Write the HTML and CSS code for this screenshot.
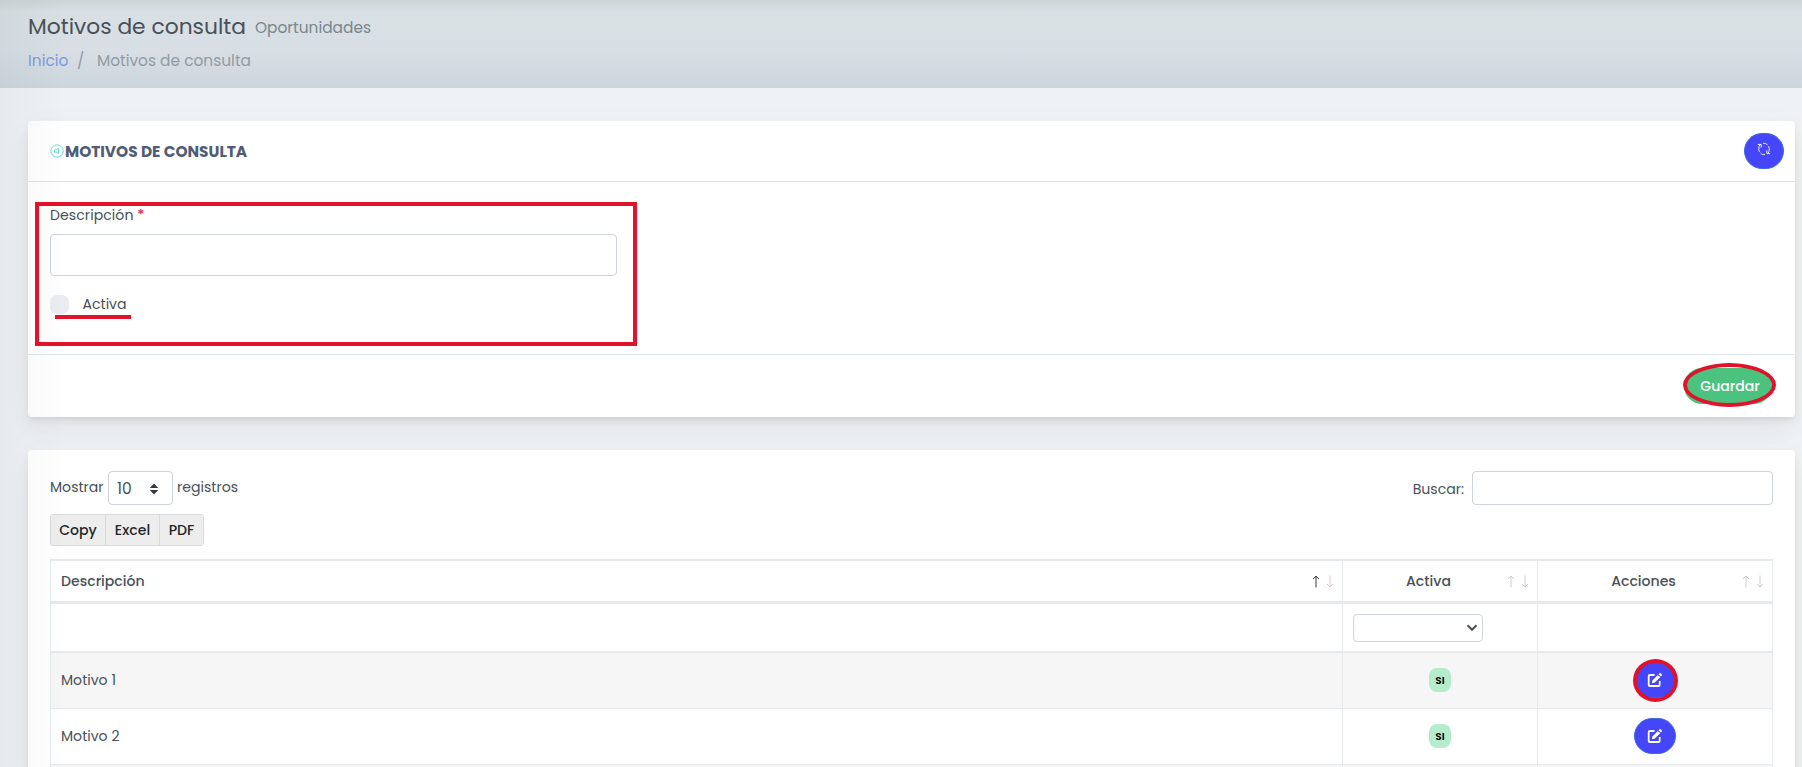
FILE: index.html
```html
<!DOCTYPE html>
<html lang="es">
<head>
<meta charset="utf-8">
<title>Motivos de consulta</title>
<link rel="stylesheet" href="styles.css">
</head>
<body>
<div class="page">
  <header class="page-head">
    <div class="title-row"><h1 class="title">Motivos de consulta</h1><span class="subtitle">Oportunidades</span></div>
    <nav class="crumbs"><a class="crumb-link">Inicio</a><span class="crumb-sep">/</span><span class="crumb-current">Motivos de consulta</span></nav>
  </header>
  <main class="content">
    <section class="card form-card">
      <div class="card-head">
        <svg class="card-icon" width="14" height="14" viewBox="0 0 14 14" fill="none"><defs><linearGradient id="ig" x1="0" y1="0" x2="0" y2="1"><stop offset="0" stop-color="#5fe6c0"/><stop offset="1" stop-color="#62cdf0"/></linearGradient></defs><circle cx="7" cy="7" r="6.2" stroke="url(#ig)"/><path d="M8.300 4.300v5.400L6.200 8.200H4.500V5.900h1.700z" stroke="url(#ig)"/></svg>
        <h2 class="card-title">MOTIVOS DE CONSULTA</h2>
        <button class="btn-round refresh"><svg width="14" height="14" viewBox="0 0 14 14" fill="none" stroke="#fff" stroke-width=".9"><path d="M6 1.300q2.700-.3 4.500 1.500M11.600 4.200q1.200 2.500.4 5.500M8 12.700q-2.700.3-4.500-1.500M2.400 9.800Q1.200 7.300 2 4.300L3.400 2.400M12 9.700l-1.400 1.900M.8 2.400h3.400v3.200M13.200 11.600H9.800V8.400"/></svg></button>
      </div>
      <div class="card-body">
        <label class="label">Descripción <span class="req">*</span></label>
        <div class="input big"></div>
        <div class="check-row"><span class="check"></span><span class="check-label">Activa</span></div>
      </div>
      <div class="card-foot"><button class="save"><span>Guardar</span></button></div>
    </section>
    <section class="card list-card">
      <div class="toolbar">
        <div class="length"><span class="t-show">Mostrar</span><div class="input len-select"><span>10</span><svg width="10" height="12" viewBox="0 0 10 12" fill="#343a40"><path d="M5 .4 9.200 5H.8zM5 11.600.8 7h8.400z"/></svg></div><span class="t-reg">registros</span></div>
        <div class="search"><span class="t-search">Buscar:</span><div class="input search-input"></div></div>
      </div>
      <div class="exports"><button class="export e1"><span>Copy</span></button><button class="export e2"><span>Excel</span></button><button class="export e3"><span>PDF</span></button></div>
      <div class="table">
        <div class="row head">
          <div class="cell first"><span class="th th-desc">Descripción</span><span class="sort"><svg class="on" width="8" height="13" viewBox="0 0 8 13"><path d="M4 12.500V1M1 4l3-3 3 3"/></svg><svg width="8" height="13" viewBox="0 0 8 13"><path d="M4 .5V12M1 9l3 3 3-3"/></svg></span></div>
          <div class="cell mid"><span class="th th-act">Activa</span><span class="sort"><svg width="8" height="13" viewBox="0 0 8 13"><path d="M4 12.500V1M1 4l3-3 3 3"/></svg><svg width="8" height="13" viewBox="0 0 8 13"><path d="M4 .5V12M1 9l3 3 3-3"/></svg></span></div>
          <div class="cell mid"><span class="th th-acc">Acciones</span><span class="sort"><svg width="8" height="13" viewBox="0 0 8 13"><path d="M4 12.500V1M1 4l3-3 3 3"/></svg><svg width="8" height="13" viewBox="0 0 8 13"><path d="M4 .5V12M1 9l3 3 3-3"/></svg></span></div>
        </div>
        <div class="row filter">
          <div class="cell"></div>
          <div class="cell"><div class="input filter-select"><svg width="12" height="8" viewBox="0 0 12 8" fill="none" stroke="#495057" stroke-width="2"><path d="m1.500 1.300 4.500 4.500 4.500-4.500"/></svg></div></div>
          <div class="cell"></div>
        </div>
        <div class="row body-row odd">
          <div class="cell"><span class="td">Motivo 1</span></div>
          <div class="cell mid"><span class="badge">SI</span></div>
          <div class="cell mid"><button class="btn-round edit"><svg width="16" height="16" viewBox="0 0 16 16" fill="none"><path d="M7.500 3H3Q1.700 3 1.700 4.300v8.400Q1.700 14 3 14h8.400q1.300 0 1.300-1.300V9" stroke="#fff" stroke-width="1.800"/><path d="m5.300 8.600 5.600-5.700 2.300 2.300-5.700 5.600-2.500.4zM11.600 2.200l.9-.9q.6-.6 1.200 0l1.100 1.100q.6.6 0 1.200l-.9.9z" fill="#fff"/></svg></button></div>
        </div>
        <div class="row body-row">
          <div class="cell"><span class="td">Motivo 2</span></div>
          <div class="cell mid"><span class="badge">SI</span></div>
          <div class="cell mid"><button class="btn-round edit"><svg width="16" height="16" viewBox="0 0 16 16" fill="none"><path d="M7.500 3H3Q1.700 3 1.700 4.300v8.400Q1.700 14 3 14h8.400q1.300 0 1.300-1.300V9" stroke="#fff" stroke-width="1.800"/><path d="m5.300 8.600 5.600-5.700 2.300 2.300-5.700 5.600-2.500.4zM11.600 2.200l.9-.9q.6-.6 1.200 0l1.100 1.100q.6.6 0 1.200l-.9.9z" fill="#fff"/></svg></button></div>
        </div>
        <div class="row odd"><div class="cell"></div><div class="cell"></div><div class="cell"></div></div>
      </div>
    </section>
  </main>
  <div class="edge-shade"></div>
  <div class="mark mark-form"></div>
  <div class="mark-line"></div>
  <div class="mark mark-save"></div>
  <div class="mark mark-edit"></div>
</div>
</body>
</html>
```

FILE: styles.css
```css
* { box-sizing: border-box; }
body { margin: 0; }
button { border: 0; padding: 0; font: inherit; }
.page { position: relative; width: 1802px; height: 767px; overflow: hidden; background: #eff2f5; color: #495057; font: 14.080px/20px Poppins, Inter, "Open Sans", sans-serif; white-space: nowrap; }
.page-head { height: 88px; padding: 14px 28px 0; background: linear-gradient(#cdd4d6 0, #d8e0e3 12px, #d7dfe5 50px, #ced6dd 100%); }
.title-row { display: flex; height: 37px; }
.title { margin: 0; width: 227px; font-size: 21.800px; line-height: 26px; font-weight: 400; }
.subtitle { font-size: 15.400px; line-height: 27px; color: #7b868d; }
.crumbs { display: flex; font-size: 15.400px; color: #929ba3; }
.crumb-link { width: 49px; color: #7f9be0; }
.crumb-sep { width: 20px; }
.content { padding: 33px 7px 0 28px; }
.card { background: #fff; border-radius: 4px; box-shadow: 0 7.500px 35px rgba(4,9,20,.03), 0 15px 22.500px rgba(4,9,20,.03), 0 4px 8.500px rgba(4,9,20,.05), 0 2px 3px rgba(4,9,20,.03); }
.form-card { height: 296px; margin-bottom: 33px; }
.card-head { display: flex; align-items: center; height: 61px; padding: 0 11px 0 22px; border-bottom: 1px solid #dee2e6; }
.card-icon { margin: 0 1px 0 0; }
.card-title { margin: 2px 0 0; font-size: 15.400px; font-weight: 700; color: #505c76; }
.btn-round { display: flex; align-items: center; justify-content: center; background: #4545fa; border: 1px solid #3f6ad8; border-radius: 18px; height: 36px; }
.refresh { width: 40px; margin-left: auto; margin-top: -1px; }
.refresh svg { margin-top: -3px; }
.card-body { height: 172px; padding: 23px 22px 0; }
.label { display: block; height: 29px; letter-spacing: .06px; }
.req { color: #f01559; font-weight: 500; }
.input { background: #fff; border: 1px solid #ced4da; border-radius: 4px; }
.big { width: 567px; height: 42px; }
.check-row { display: flex; align-items: center; gap: 13.500px; margin-top: 18px; }
.check { width: 19px; height: 19px; border-radius: 7px; background: #ebecf1; }
.card-foot { display: flex; justify-content: flex-end; height: 63px; padding: 13px 23px 0; border-top: 1px solid #dee5ec; }
.save { width: 88px; height: 36px; border-radius: 18px; background: #4bc37f; color: #fff; font-weight: 500; padding: 0 0 1px 4px; }
.list-card { height: 340px; padding: 21px 22px 0; }
.toolbar { display: flex; justify-content: space-between; height: 43px; }
.length, .search { display: flex; height: 34px; align-items: center; }
.t-show { width: 58px; margin-top: -2px; }
.len-select { display: flex; align-items: center; justify-content: space-between; width: 65px; height: 34px; padding: 1px 13px 0 8px; font-size: 15.400px; }
.t-reg { margin: -2px 0 0 4px; }
.t-search { margin-top: 2px; }
.search-input { width: 301px; height: 34px; margin-left: 8px; }
.exports { display: flex; width: 154px; height: 32px; border: 1px solid #dadada; border-radius: 3px; overflow: hidden; margin-bottom: 13px; }
.export { background: #ededed; color: #212529; font-weight: 500; border-left: 1px solid #dadada; }
.e1 { width: 54px; border-left: 0; }
.e2 { width: 54px; }
.e3 { width: 44px; }
.table { width: 1723px; border: 1px solid #e6eaed; border-top-width: 2px; }
.row { display: grid; grid-template-columns: 1292px 195px 234px; height: 56px; border-bottom: 1px solid #e6eaed; }
.head { height: 43px; border-bottom-width: 3px; }
.filter { height: 49px; border-bottom-width: 2px; }
.odd { background: #f6f6f6; }
.cell { position: relative; display: flex; align-items: center; padding-left: 10px; border-right: 1px solid #e6eaed; }
.cell:last-child { border-right: 0; }
.mid { justify-content: center; padding: 0; }
.body-row .cell { padding-bottom: 2px; }
.th { font-weight: 500; }
.mid .th { padding-right: 23px; }
.sort { position: absolute; right: 8px; top: 14px; display: flex; gap: 6px; }
.sort svg { fill: none; stroke: #cfcdd0; stroke-width: 1; }
.sort .on { stroke: #343a40; }
.filter-select { width: 130px; height: 28px; display: flex; align-items: center; justify-content: flex-end; padding-right: 4px; }
.badge { width: 22px; height: 24px; border-radius: 8px; background: #b5edcc; color: #000; font-size: 10.560px; line-height: 25px; font-weight: 600; text-align: center; }
.edit { width: 42px; }
.edge-shade { position: absolute; left: 0; top: 0; width: 63px; height: 767px; background: linear-gradient(90deg, rgba(40,60,70,.045), rgba(40,60,70,.005)); }
.mark { position: absolute; border: 4px solid #e0132b; }
.mark-form { left: 35px; top: 202px; width: 602px; height: 144px; }
.mark-line { position: absolute; left: 55px; top: 315px; width: 76px; height: 4px; background: #e0132b; }
.mark-save { left: 1683px; top: 363px; width: 93px; height: 44px; border-radius: 50%; }
.mark-edit { left: 1633px; top: 659px; width: 45px; height: 43px; border-radius: 50%; }
```
